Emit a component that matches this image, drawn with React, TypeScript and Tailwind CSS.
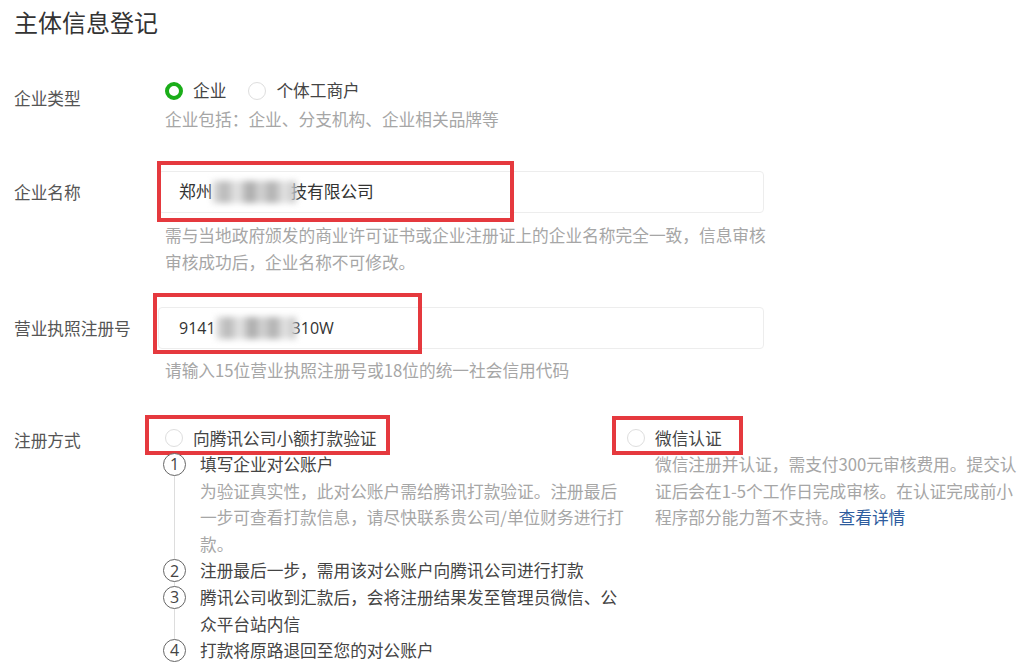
import React from "react";

function Radio({ checked = false }: { checked?: boolean }) {
  return checked ? (
    <span className="inline-block w-[18px] h-[18px] rounded-full border-[4px] border-[#1aad19] bg-white" />
  ) : (
    <span className="inline-block w-[18px] h-[18px] rounded-full border border-[#dedede] bg-white" />
  );
}

function StepNum({ n }: { n: number }) {
  return (
    <span className="relative z-10 flex items-center justify-center w-[23px] h-[23px] shrink-0 rounded-full border-[1.5px] border-[#666] bg-white text-[16px] leading-none text-[#444] font-['Open_Sans',sans-serif]">
      {n}
    </span>
  );
}

// 打码的模糊块
function Smudge({ w }: { w: string }) {
  return (
    <span
      className={`inline-block ${w} h-[22px] align-middle blur-[3px] bg-[linear-gradient(90deg,#e2e2e2,#b5b5b5_15%,#e8e8e8_30%,#a6a6a6_45%,#d6d6d6_58%,#adadad_72%,#e6e6e6_86%,#c0c0c0)]`}
    />
  );
}

export default function App() {
  return (
    <div className="relative w-[1032px] h-[669px] overflow-hidden bg-white font-['Noto_Sans_CJK_SC','Noto_Sans',sans-serif] text-[16.7px] text-[#555]">
      <div className="pl-[14px] pt-[8px]">
        {/* 标题 */}
        <h1 className="text-[24px] leading-[28px] text-[#333]">主体信息登记</h1>

        {/* 企业类型 */}
        <div className="flex mt-[42px]">
          <div className="w-[151px] shrink-0 pt-[7px] leading-[26px]">企业类型</div>
          <div>
            <div className="flex items-center h-[26px] text-[#444]">
              <Radio checked />
              <span className="ml-[10px]">企业</span>
              <span className="ml-[22px] flex items-center">
                <Radio />
              </span>
              <span className="ml-[10px]">个体工商户</span>
            </div>
            <div className="mt-[2px] leading-[26px] text-[#a6a6a6]">
              企业包括：企业、分支机构、企业相关品牌等
            </div>
          </div>
        </div>

        {/* 企业名称 */}
        <div className="flex mt-[39px]">
          <div className="w-[151px] shrink-0 leading-[42px]">企业名称</div>
          <div>
            <div className="-ml-[7px] w-[606px] h-[42px] flex items-center pl-[20px] border border-[#ededed] rounded-[4px] text-[#333]">
              <span>郑州</span>
              <Smudge w="w-[84px]" />
              <span className="-ml-[6px]">技有限公司</span>
            </div>
            <div className="mt-[9px] leading-[27px] text-[#a6a6a6] whitespace-nowrap">
              需与当地政府颁发的商业许可证书或企业注册证上的企业名称完全一致，信息审核
              <br />
              审核成功后，企业名称不可修改。
            </div>
          </div>
        </div>

        {/* 营业执照注册号 */}
        <div className="flex mt-[31px]">
          <div className="w-[151px] shrink-0 leading-[42px]">营业执照注册号</div>
          <div>
            <div className="-ml-[7px] w-[606px] h-[42px] flex items-center pl-[20px] border border-[#ededed] rounded-[4px] text-[#333] font-['Open_Sans',sans-serif] text-[16px]">
              <span>9141</span>
              <Smudge w="w-[80px]" />
              <span className="-ml-[4px]">310W</span>
            </div>
            <div className="mt-[8px] leading-[27px] text-[#a6a6a6]">
              请输入15位营业执照注册号或18位的统一社会信用代码
            </div>
          </div>
        </div>

        {/* 注册方式 */}
        <div className="flex mt-[41px]">
          <div className="w-[151px] shrink-0 pt-[2px] leading-[26px]">注册方式</div>
          <div className="-ml-[2px] flex leading-[26.6px]">
            <div className="w-[464px] shrink-0">
              <div className="flex items-center h-[26px] text-[#444]">
                <span className="w-[22px] flex justify-center">
                  <Radio />
                </span>
                <span className="ml-[8px]">向腾讯公司小额打款验证</span>
              </div>
              <div className="relative text-[#444]">
                <div className="absolute left-[11px] top-[18px] bottom-[18px] w-px bg-[#dddddd]" />
                <div className="flex">
                  <div className="h-[26.6px] flex items-center">
                    <StepNum n={1} />
                  </div>
                  <div className="ml-[14px]">
                    <div>填写企业对公账户</div>
                    <div className="text-[#a6a6a6] whitespace-nowrap">
                      为验证真实性，此对公账户需给腾讯打款验证。注册最后
                      <br />
                      一步可查看打款信息，请尽快联系贵公司/单位财务进行打
                      <br />
                      款。
                    </div>
                  </div>
                </div>
                <div className="flex">
                  <div className="h-[26.6px] flex items-center">
                    <StepNum n={2} />
                  </div>
                  <div className="ml-[14px]">注册最后一步，需用该对公账户向腾讯公司进行打款</div>
                </div>
                <div className="flex">
                  <div className="h-[26.6px] flex items-center">
                    <StepNum n={3} />
                  </div>
                  <div className="ml-[14px] whitespace-nowrap">
                    腾讯公司收到汇款后，会将注册结果发至管理员微信、公
                    <br />
                    众平台站内信
                  </div>
                </div>
                <div className="flex">
                  <div className="h-[26.6px] flex items-center">
                    <StepNum n={4} />
                  </div>
                  <div className="ml-[14px]">打款将原路退回至您的对公账户</div>
                </div>
              </div>
            </div>

            <div>
              <div className="flex items-center h-[26px] text-[#444]">
                <Radio />
                <span className="ml-[10px]">微信认证</span>
              </div>
              <div className="pl-[28px] text-[#a6a6a6] whitespace-nowrap">
                微信注册并认证，需支付300元审核费用。提交认
                <br />
                证后会在1-5个工作日完成审核。在认证完成前小
                <br />
                程序部分能力暂不支持。<span className="text-[#2e5c9e]">查看详情</span>
              </div>
            </div>
          </div>
        </div>
      </div>

      {/* 红色标注框 */}
      <div className="absolute left-[157px] top-[161px] w-[357px] h-[61px] border-[4px] border-[#e5393e] pointer-events-none" />
      <div className="absolute left-[153px] top-[293px] w-[269px] h-[61px] border-[4px] border-[#e5393e] pointer-events-none" />
      <div className="absolute left-[145px] top-[415px] w-[245px] h-[40px] border-[4px] border-[#e5393e] pointer-events-none" />
      <div className="absolute left-[612px] top-[416px] w-[131px] h-[39px] border-[4px] border-[#e5393e] pointer-events-none" />
    </div>
  );
}
